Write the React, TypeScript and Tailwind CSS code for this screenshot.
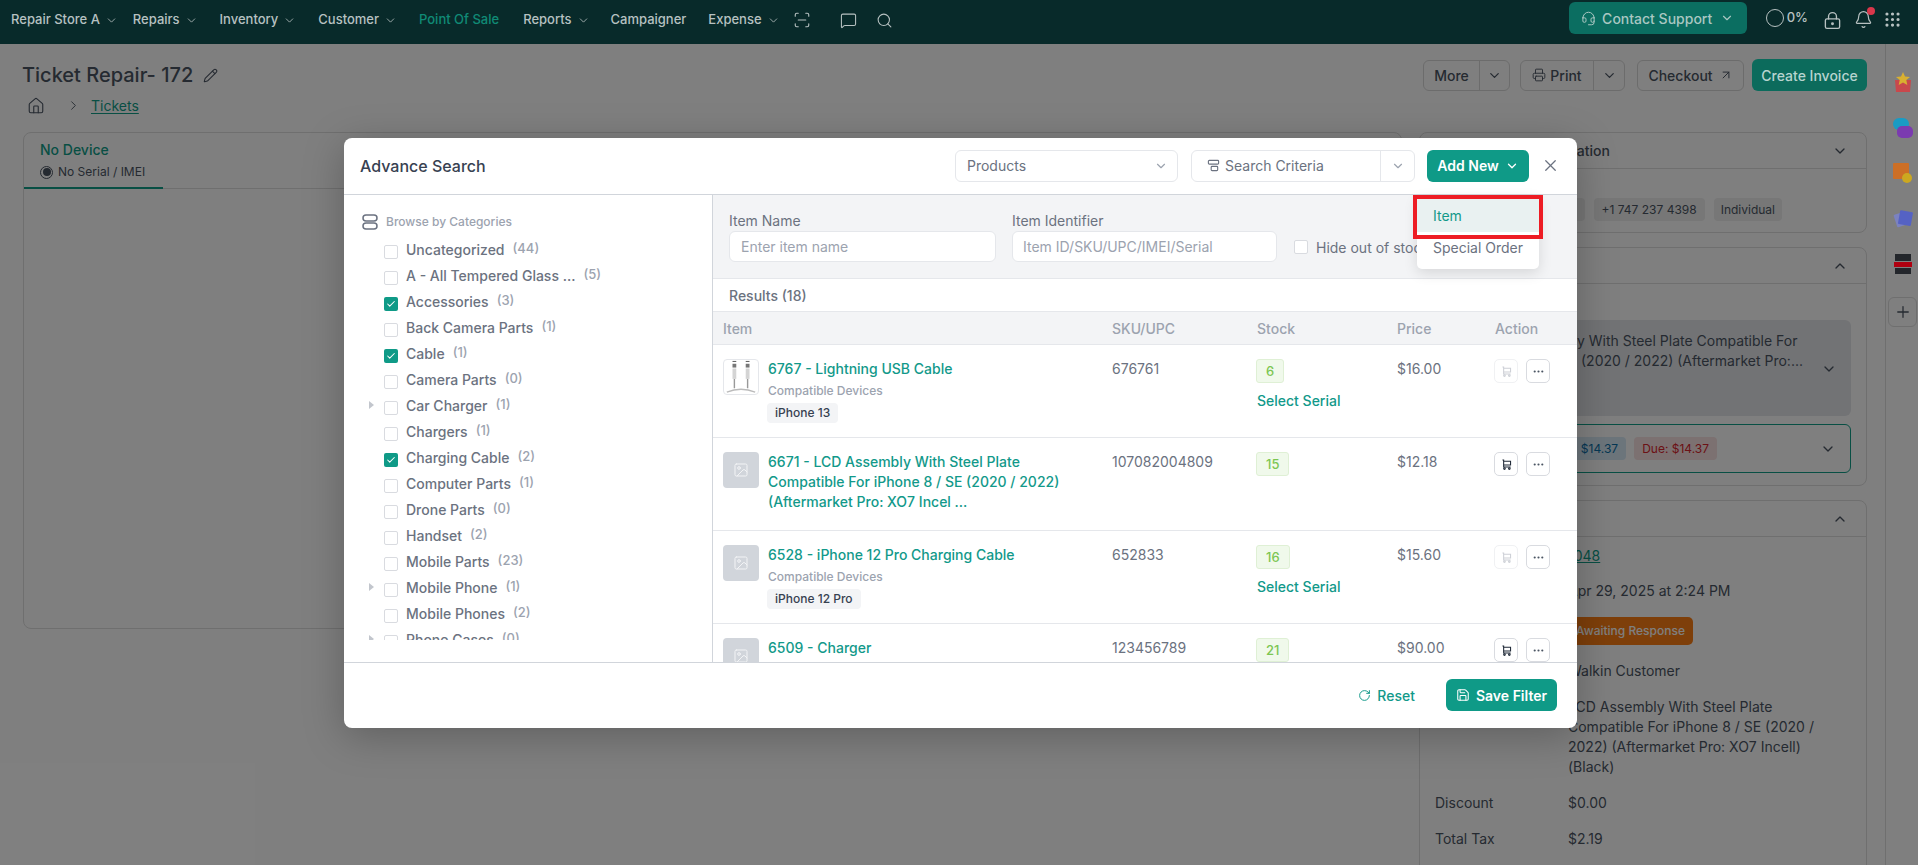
import {
  ArrowUpRight,
  Bell,
  Check,
  ChevronDown,
  ChevronRight,
  ChevronUp,
  Ellipsis,
  Grip,
  Headset,
  House,
  Image,
  LockKeyhole,
  MessageSquare,
  Pencil,
  Plus,
  Printer,
  RotateCw,
  Save,
  ScanLine,
  Search,
  X,
} from 'lucide-react'

const navItems = [
  { label: 'Repair Store A', menu: true, fix: '-mr-[6px]' },
  { label: 'Repairs', menu: true, fix: '' },
  { label: 'Inventory', menu: true, fix: 'ml-[1px]' },
  { label: 'Customer', menu: true, fix: 'ml-[1px]' },
  { label: 'Point Of Sale', menu: false, active: true, fix: 'ml-[1px]' },
  { label: 'Reports', menu: true, fix: 'ml-[3px]' },
  { label: 'Campaigner', menu: false, fix: '' },
  { label: 'Expense', menu: true, fix: 'ml-[1px]' },
]

const categories = [
  { name: 'Uncategorized', count: 44 },
  { name: 'A - All Tempered Glass ...', count: 5 },
  { name: 'Accessories', count: 3, checked: true },
  { name: 'Back Camera Parts', count: 1 },
  { name: 'Cable', count: 1, checked: true },
  { name: 'Camera Parts', count: 0 },
  { name: 'Car Charger', count: 1, caret: true },
  { name: 'Chargers', count: 1 },
  { name: 'Charging Cable', count: 2, checked: true },
  { name: 'Computer Parts', count: 1 },
  { name: 'Drone Parts', count: 0 },
  { name: 'Handset', count: 2 },
  { name: 'Mobile Parts', count: 23 },
  { name: 'Mobile Phone', count: 1, caret: true },
  { name: 'Mobile Phones', count: 2 },
  { name: 'Phone Cases', count: 0, caret: true },
]

const results = [
  {
    title: ['6767 - Lightning USB Cable'],
    sku: '676761',
    stock: 6,
    price: '$16.00',
    device: 'iPhone 13',
    photo: true,
    disabled: true,
  },
  {
    title: ['6671 - LCD Assembly With Steel Plate', 'Compatible For iPhone 8 / SE (2020 / 2022)', '(Aftermarket Pro: XO7 Incel ...'],
    sku: '107082004809',
    stock: 15,
    price: '$12.18',
  },
  {
    title: ['6528 - iPhone 12 Pro Charging Cable'],
    sku: '652833',
    stock: 16,
    price: '$15.60',
    device: 'iPhone 12 Pro',
    disabled: true,
  },
  {
    title: ['6509 - Charger'],
    sku: '123456789',
    stock: 21,
    price: '$90.00',
  },
]

function CartIcon({ className }: { className: string }) {
  return (
    <svg viewBox="0 0 16 16" fill="none" stroke="currentColor" strokeWidth="1.3" className={className}>
      <path d="M3 2.500h1.500v8.500H13" />
      <path d="M4.500 4h8.500v4.500H4.500" />
      <circle cx="5.500" cy="13" r="1" />
      <circle cx="11.500" cy="13" r="1" />
    </svg>
  )
}

function CableThumb() {
  return (
    <svg viewBox="0 0 36 36" className="w-full h-full">
      <rect x="9" y="1" width="4" height="1" fill="#555" />
      <rect x="23" y="1" width="4" height="1" fill="#555" />
      <rect x="9" y="4" width="4" height="4" fill="#777" />
      <rect x="23" y="4" width="4" height="4" fill="#777" />
      <rect x="9" y="9" width="4" height="11" fill="#d4d4d4" />
      <rect x="23" y="9" width="4" height="11" fill="#d4d4d4" />
      <path d="M11 20v10M25 20v10" stroke="#999" strokeWidth="1.500" />
      <path d="M3 34c5-2 9-3 15-3s10 1 15 3" stroke="#bbb" strokeWidth="1.500" fill="none" />
    </svg>
  )
}

function TopBar() {
  return (
    <header className="relative z-10 h-[44px] bg-[#082a2a] flex items-center pl-[11px] pr-[16px] shrink-0 text-[13px] font-medium text-[#b7c1c1]">
      <nav className="flex items-center gap-[21px] -mt-[4px]">
        {navItems.map((item) => (
          <div key={item.label} className={`flex items-center gap-[5px] whitespace-nowrap ${item.fix}`}>
            <span className={item.active ? 'text-[#108a76]' : ''}>{item.label}</span>
            {item.menu && <ChevronDown size={13} strokeWidth={1.5} />}
          </div>
        ))}
        <ScanLine size={18} strokeWidth={1.5} className="-ml-[8px]" />
        <MessageSquare size={17} strokeWidth={1.500} className="ml-[8px]" />
        <Search size={17} strokeWidth={1.500} className="-ml-[2px]" />
      </nav>
      <div className="ml-auto flex items-center -mt-[8px]">
        <button className="w-[178px] h-[32px] rounded-[6px] bg-[#0b6e61] flex items-center justify-center gap-[6px] text-[14px] text-[#a9c7c2]">
          <Headset size={15} strokeWidth={1.600} />
          Contact Support
          <ChevronDown size={14} strokeWidth={2} className="ml-[2px]" />
        </button>
        <span className="ml-[19px] w-[18px] h-[18px] rounded-full border-[1.500px] border-[#b7c1c1]" />
        <span className="ml-[3px] text-[13px]">0%</span>
        <LockKeyhole size={19} strokeWidth={1.700} className="ml-[15px] mt-[5px]" />
        <div className="relative ml-[12px] mt-[3px]">
          <Bell size={19} strokeWidth={1.500} />
          <span className="absolute -top-[3px] right-[-2px] w-[8px] h-[8px] rounded-full bg-[#d9374b]" />
        </div>
        <Grip size={19} strokeWidth={2} className="ml-[10px] mt-[3px]" />
      </div>
    </header>
  )
}

function RailIcons() {
  return (
    <>
      <svg viewBox="0 0 20 20" className="relative z-[11] w-[20px] h-[20px]">
        <path d="M2 8h16l-1 12H3z" fill="#c9484c" />
        <path d="M10 0l2 4.500 5 .5-3.700 3 1 5L10 10.500 5.700 13l1-5L3 5l5-.5z" fill="#d9b030" />
      </svg>
      <svg viewBox="0 0 20 20" className="relative z-[11] w-[20px] h-[20px]">
        <rect x="0" y="0" width="16" height="12" rx="6" fill="#1a9bc4" />
        <rect x="4" y="8" width="16" height="12" rx="5" fill="#7b3bb0" />
      </svg>
      <svg viewBox="0 0 20 20" className="relative z-[11] w-[20px] h-[20px]">
        <rect x="0" y="0" width="16" height="16" rx="1" fill="#cc6f26" />
        <circle cx="14" cy="15" r="5" fill="#cca820" />
      </svg>
      <svg viewBox="0 0 20 20" className="relative z-[11] w-[20px] h-[20px]">
        <rect x="2" y="4" width="13" height="13" rx="1" fill="#7b82c0" transform="rotate(-18 8 10)" />
        <rect x="6" y="2" width="13" height="14" rx="1" fill="#5562c4" transform="rotate(10 12 9)" />
      </svg>
      <svg viewBox="0 0 20 20" className="relative z-[11] w-[20px] h-[20px]">
        <rect x="2" y="0" width="16" height="7" fill="#23262b" />
        <rect x="1" y="8" width="18" height="5" fill="#b00010" />
        <rect x="2" y="14" width="16" height="6" fill="#23262b" />
      </svg>
    </>
  )
}

function PageBehind() {
  return (
    <div className="flex flex-1 min-h-0">
      <main className="flex-1 min-w-0 pl-[23px] pr-[18px]">
        <div className="flex items-start justify-between h-[88px]">
          <div>
            <div className="flex items-center gap-[10px] mt-[17px] -ml-px h-[28px] text-[#4b5563]">
              <h1 className="text-[20px] font-medium leading-none">Ticket Repair- 172</h1>
              <Pencil size={15} strokeWidth={1.700} />
            </div>
            <div className="flex items-center mt-[6px] ml-[4px] text-[#4b5563]">
              <House size={18} strokeWidth={1.500} />
              <ChevronRight size={15} strokeWidth={1.500} className="ml-[21px]" />
              <span className="ml-[10px] text-[14px] text-[#109e89] underline underline-offset-2">Tickets</span>
            </div>
          </div>
          <div className="flex items-center gap-[10px] mt-[15px] text-[14px] font-medium text-[#4b5563]">
            <div className="flex h-[31px] w-[87px] border border-[#d8d8d8] bg-white rounded-[6px]">
              <span className="w-[56px] flex items-center justify-center border-r border-[#d8d8d8]">More</span>
              <span className="flex-1 flex items-center justify-center"><ChevronDown size={15} /></span>
            </div>
            <div className="flex h-[31px] w-[105px] border border-[#d8d8d8] bg-white rounded-[6px]">
              <span className="w-[73px] flex items-center justify-center gap-[4px] border-r border-[#d8d8d8]"><Printer size={14} strokeWidth={1.600} />Print</span>
              <span className="flex-1 flex items-center justify-center"><ChevronDown size={15} /></span>
            </div>
            <div className="flex items-center justify-center gap-[6px] h-[31px] w-[107px] ml-[2px] border border-[#d8d8d8] bg-white rounded-[6px]">
              Checkout <ArrowUpRight size={14} strokeWidth={1.700} />
            </div>
            <div className="relative z-[11] flex items-center justify-center h-[32px] w-[115px] -ml-[2px] rounded-[6px] bg-[#0c6b5c] text-[#b7d4cf]">
              Create Invoice
            </div>
          </div>
        </div>
        <div className="flex gap-[17px] items-start">
          <section className="flex-1 min-w-0 h-[497px] border border-[#dedede] rounded-[8px] bg-white">
            <div className="h-[56px] border-b border-[#dedede]">
              <div className="w-[139px] h-[56px] pl-[16px] pt-[7px] border-b-2 border-[#109e89]">
                <p className="text-[14px] font-medium text-[#109e89] leading-[20px]">No Device</p>
                <p className="flex items-center gap-[5px] mt-[4px] text-[12px] text-[#4b5563] leading-[16px]">
                  <span className="w-[13px] h-[13px] rounded-full border border-[#4b5563] flex items-center justify-center">
                    <span className="w-[8px] h-[8px] rounded-full bg-[#4b5563]" />
                  </span>
                  No Serial / IMEI
                </p>
              </div>
            </div>
          </section>
          <aside className="w-[448px] shrink-0 flex flex-col gap-[14px] text-[14px] text-[#4b5563]">
            <section className="h-[101px] border border-[#dedede] rounded-[8px] bg-white">
              <div className="h-[36px] border-b border-[#dedede] flex items-center justify-between pl-[44px] pr-[18px]">
                <span className="font-medium">Customer Information</span>
                <ChevronDown size={16} />
              </div>
              <div className="flex justify-end gap-[9px] pr-[84px] pt-[29px] text-[12px]">
                <span className="h-[23px] w-[60px] rounded-[4px] bg-[#eeeeee]" />
                <span className="h-[23px] px-[8px] flex items-center rounded-[4px] bg-[#eeeeee]">+1 747 237 4398</span>
                <span className="h-[23px] px-[7px] flex items-center rounded-[4px] bg-[#eeeeee]">Individual</span>
              </div>
            </section>
            <section className="h-[239px] border border-[#dedede] rounded-[8px] bg-white px-[15px]">
              <div className="-mx-[15px] h-[36px] border-b border-[#dedede] flex items-center justify-between pl-[16px] pr-[18px]">
                <span className="font-medium">Parts</span>
                <ChevronUp size={16} />
              </div>
              <div className="mt-[36px] h-[96px] rounded-[6px] bg-[#e5e7eb] pl-[8px] pr-[14px] flex items-start justify-between">
                <p className="mt-[11px] w-[360px] leading-[20px] whitespace-nowrap overflow-hidden text-right">
                  <span className="block pr-[6px]">6671 - LCD Assembly With Steel Plate Compatible For</span>
                  <span className="block">iPhone 8 / SE (2020 / 2022) (Aftermarket Pro:...</span>
                </p>
                <ChevronDown size={16} className="mt-[41px]" />
              </div>
              <div className="mt-[8px] h-[49px] rounded-[6px] border border-[#109e89] flex items-center justify-between pr-[14px]">
                <div className="flex gap-[8px] ml-auto mr-[103px] text-[12px]">
                  <span className="h-[23px] px-[8px] flex items-center rounded-[4px] bg-[#d8eaf6] text-[#0b6fa8]">Paid: $14.37</span>
                  <span className="h-[23px] px-[8px] flex items-center rounded-[4px] bg-[#f8e2e2] text-[#d8242c]">Due: $14.37</span>
                </div>
                <ChevronDown size={16} />
              </div>
            </section>
            <section className="h-[400px] border border-[#dedede] rounded-[8px] bg-white">
              <div className="h-[36px] border-b border-[#dedede] flex items-center justify-between pl-[16px] pr-[18px]">
                <span className="font-medium">Invoice</span>
                <ChevronUp size={16} />
              </div>
              <dl className="grid grid-cols-[133px_1fr] pl-[15px] pr-[20px] pt-[9px] leading-[20px]">
                <dt className="h-[35px]">Invoice</dt>
                <dd className="text-[#109e89] underline">1048</dd>
                <dt className="h-[36px]">Created</dt>
                <dd>Apr 29, 2025 at 2:24 PM</dd>
                <dt className="h-[44px]">Status</dt>
                <dd>
                  <span className="inline-flex h-[28px] items-center px-[8px] rounded-[5px] bg-[#fc7e14] text-[12px] font-medium text-white">Awaiting Response</span>
                </dd>
                <dt className="h-[36px]">Customer</dt>
                <dd>Walkin Customer</dd>
                <dt className="h-[96px]">Item</dt>
                <dd>LCD Assembly With Steel Plate Compatible For iPhone 8 / SE (2020 / 2022) (Aftermarket Pro: XO7 Incell) (Black)</dd>
                <dt className="h-[36px]">Discount</dt>
                <dd>$0.00</dd>
                <dt>Total Tax</dt>
                <dd>$2.19</dd>
              </dl>
            </section>
          </aside>
        </div>
      </main>
      <aside className="w-[33px] shrink-0 border-l border-[#dedede] flex flex-col items-center pt-[28px] gap-[25.500px] pl-[1px]">
        <RailIcons />
        <span className="w-[29px] h-[30px] -mt-[3px] rounded-[6px] border border-[#dedede] flex items-center justify-center text-[#4b5563]">
          <Plus size={18} strokeWidth={1.700} />
        </span>
      </aside>
    </div>
  )
}

function CategoryList() {
  return (
    <div className="w-[369px] shrink-0 border-r border-[#d1d5db] pl-[18px] pt-[17px]">
      <div className="flex items-center h-[20px] gap-[8px] text-[12px] font-medium text-[#9ca3af]">
        <svg viewBox="0 0 16 16" fill="none" stroke="#6b7280" strokeWidth="1.500" className="w-[16px] h-[16px]">
          <rect x="1" y="1" width="14" height="6" rx="3" />
          <rect x="1" y="9" width="14" height="6" rx="3" />
        </svg>
        Browse by Categories
      </div>
      <ul className="mt-[4px] h-[404px] overflow-hidden">
        {categories.map((c) => (
          <li key={c.name} className="flex items-center h-[26px] whitespace-nowrap">
            <span className="w-[22px] flex items-center justify-start pl-[7px]">
              {c.caret && <span className="w-0 h-0 border-y-[4px] border-y-transparent border-l-[5px] border-l-[#c2c6cd]" />}
            </span>
            {c.checked ? (
              <span className="w-[14px] h-[14px] mt-[5px] rounded-[2px] bg-[#0f9a87] flex items-center justify-center">
                <Check size={10} strokeWidth={2.500} className="text-white" />
              </span>
            ) : (
              <span className="w-[14px] h-[14px] mt-[5px] rounded-[2px] border border-[#d9dbe0]" />
            )}
            <span className="ml-[8px] text-[14px] font-medium text-[#6b7280]">{c.name}</span>
            <span className="ml-[8px] text-[13px] font-medium text-[#9ca3af]">({c.count})</span>
          </li>
        ))}
      </ul>
    </div>
  )
}

function ResultRow({ row }: { row: (typeof results)[number] }) {
  return (
    <div className="grid grid-cols-[389px_145px_140px_98px_1fr] h-[93px] px-[10px] pt-[14px] border-b border-[#e5e7eb] shrink-0 text-[14px] leading-[20px] text-[#6b7280]">
      <div className="flex gap-[9px]">
        {row.photo ? (
          <div className="w-[36px] h-[36px] shrink-0 rounded-[4px] border border-[#e5e7eb] overflow-hidden">
            <CableThumb />
          </div>
        ) : (
          <div className="w-[36px] h-[36px] shrink-0 rounded-[4px] bg-[#d1d5db] flex items-center justify-center">
            <Image size={16} strokeWidth={1.500} className="text-[#f3f4f6]" />
          </div>
        )}
        <div>
          <p className="font-medium text-[#12998a] whitespace-nowrap">
            {row.title.map((line) => (
              <span key={line} className="block">{line}</span>
            ))}
          </p>
          {row.device && (
            <>
              <p className="mt-[4px] text-[12px] leading-[16px] font-medium text-[#9ca3af]">Compatible Devices</p>
              <span className="inline-flex items-center h-[20px] mt-[4px] -ml-px px-[8px] rounded-[4px] bg-[#f3f4f6] text-[12px] font-medium text-[#374151]">
                {row.device}
              </span>
            </>
          )}
        </div>
      </div>
      <div>{row.sku}</div>
      <div className="flex flex-col items-start">
        <span className="-ml-px h-[24px] min-w-[26px] px-[9px] flex items-center justify-center rounded-[3px] border border-[#dff0d5] bg-[#f0f9eb] text-[13px] font-medium text-[#7cc652]">
          {row.stock}
        </span>
        {row.device && <span className="mt-[8px] font-medium text-[#12998a]">Select Serial</span>}
      </div>
      <div>{row.price}</div>
      <div className="flex gap-[8px] -ml-px">
        <span className={`w-[24px] h-[24px] rounded-[5px] border flex items-center justify-center ${row.disabled ? 'border-[#f0f1f3]' : 'border-[#d9dbe0]'}`}>
          <CartIcon className={`w-[13px] h-[13px] ${row.disabled ? 'text-[#cdd0d6]' : 'text-[#1f2937]'}`} />
        </span>
        <span className="w-[24px] h-[24px] rounded-[5px] border border-[#d9dbe0] flex items-center justify-center">
          <Ellipsis size={13} strokeWidth={2} className="text-[#4b5563]" />
        </span>
      </div>
    </div>
  )
}

function AdvanceSearch() {
  return (
    <div className="absolute left-[344px] top-[138px] z-20 w-[1233px] h-[590px] rounded-[8px] bg-white flex flex-col shadow-[0_8px_40px_rgba(0,0,0,0.25)]">
      <div className="h-[57px] shrink-0 border-b border-[#d1d5db] flex items-center pl-[16px] pb-[1px]">
        <h2 className="text-[16px] font-medium text-[#374151]">Advance Search</h2>
        <div className="ml-auto flex items-center">
          <div className="w-[223px] h-[32px] border border-[#e5e7eb] rounded-[6px] flex items-center justify-between pl-[11px] pr-[9px] text-[14px] text-[#6b7280]">
            Products
            <ChevronDown size={14} className="text-[#9ca3af]" />
          </div>
          <div className="ml-[13px] w-[224px] h-[32px] border border-[#e5e7eb] rounded-[6px] flex items-center text-[14px] text-[#6b7280]">
            <div className="w-[189px] h-full border-r border-[#e5e7eb] flex items-center pl-[15px] gap-[5px]">
              <svg viewBox="0 0 14 14" fill="none" stroke="currentColor" strokeWidth="1.200" className="w-[13px] h-[13px]">
                <rect x="1.500" y="1.500" width="11" height="4" rx="1" />
                <rect x="4.500" y="8" width="7" height="4.500" rx="1" />
              </svg>
              Search Criteria
            </div>
            <ChevronDown size={14} className="ml-[10px] text-[#9ca3af]" />
          </div>
          <button className="ml-[12px] w-[102px] h-[32px] rounded-[6px] bg-[#0f9a87] flex items-center justify-center gap-[6px] text-[14px] font-semibold text-white">
            Add New
            <ChevronDown size={14} strokeWidth={2.200} />
          </button>
          <X size={19} strokeWidth={1.600} className="ml-[12px] mr-[17px] text-[#6b7280]" />
        </div>
      </div>

      <div className="flex flex-1 min-h-0 border-b border-[#d1d5db]">
        <CategoryList />
        <div className="flex-1 min-w-0 flex flex-col overflow-hidden">
          <div className="h-[84px] shrink-0 bg-[#f3f4f6] border-b border-[#e5e7eb] pl-[16px] pt-[18px] flex text-[14px]">
            <label className="w-[267px]">
              <span className="block leading-[16px] text-[#6b7280]">Item Name</span>
              <span className="mt-[2px] h-[31px] flex items-center pl-[11px] bg-white border border-[#e5e7eb] rounded-[6px] text-[#9ca3af]">Enter item name</span>
            </label>
            <label className="w-[265px] ml-[16px]">
              <span className="block leading-[16px] text-[#6b7280]">Item Identifier</span>
              <span className="mt-[2px] h-[31px] flex items-center pl-[10px] bg-white border border-[#e5e7eb] rounded-[6px] text-[#9ca3af] whitespace-nowrap">Item ID/SKU/UPC/IMEI/Serial</span>
            </label>
            <div className="ml-[17px] mt-[26px] h-[16px] flex items-center gap-[8px] whitespace-nowrap text-[#6b7280]">
              <span className="w-[14px] h-[14px] rounded-[2px] bg-white border border-[#d9dbe0]" />
              <span className="w-[101px] overflow-hidden">Hide out of stock</span>
            </div>
          </div>
          <div className="h-[33px] shrink-0 flex items-center pl-[16px] border-b border-[#e5e7eb] text-[14px] font-medium text-[#6b7280]">
            Results (18)
          </div>
          <div className="h-[33px] shrink-0 grid grid-cols-[389px_145px_140px_98px_1fr] items-center px-[10px] bg-[#f3f4f6] border-b border-[#e5e7eb] text-[14px] font-medium text-[#9ca3af]">
            <span>Item</span>
            <span>SKU/UPC</span>
            <span>Stock</span>
            <span>Price</span>
            <span>Action</span>
          </div>
          <div className="flex-1 min-h-0 overflow-hidden">
            {results.map((row) => (
              <ResultRow key={row.sku} row={row} />
            ))}
          </div>
        </div>
      </div>

      <div className="h-[65px] shrink-0 flex items-center justify-end pr-[20px] pb-[1px]">
        <button className="flex items-center gap-[6px] text-[14px] font-medium text-[#12998a]">
          <RotateCw size={13} strokeWidth={1.800} />
          Reset
        </button>
        <button className="ml-[31px] w-[111px] h-[32px] rounded-[6px] bg-[#0f9a87] flex items-center justify-center gap-[6px] text-[14px] font-semibold text-white">
          <Save size={14} strokeWidth={1.800} />
          Save Filter
        </button>
      </div>

      <div className="absolute left-[1073px] top-[58px] w-[122px] h-[73px] rounded-[5px] bg-white shadow-[0_4px_14px_rgba(0,0,0,0.12)] text-[14px]">
        <div className="h-[36px] pt-[2px] bg-[#e9f1f1] pl-[16px] flex items-center rounded-t-[5px] text-[#12998a]">Item</div>
        <div className="h-[31px] pl-[16px] flex items-center whitespace-nowrap text-[#6b7280]">Special Order</div>
      </div>
      <div className="absolute left-[1069px] top-[57px] w-[130px] h-[44px] border-[4px] border-[#ed1c24]" />
    </div>
  )
}

export default function App() {
  return (
    <div className="relative w-full h-[865px] overflow-hidden flex flex-col bg-white font-['Inter',sans-serif]">
      <TopBar />
      <PageBehind />
      <div className="absolute inset-x-0 top-[44px] bottom-0 bg-black/50" />
      <AdvanceSearch />
    </div>
  )
}
